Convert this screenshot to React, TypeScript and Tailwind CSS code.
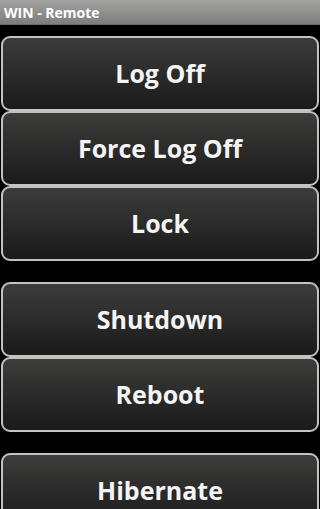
const groups = [["Log Off", "Force Log Off", "Lock"], ["Shutdown", "Reboot"], ["Hibernate"]];

const ActionButton = ({ label }: { label: string }) => (
  <button className="flex h-[75px] w-full items-center justify-center rounded-[9px] border-2 border-[#c2c2c0] bg-linear-to-b from-[#3c3d3b] to-[#1a1a1a] text-[25px] font-bold text-[#f4f4f4] font-['Open_Sans',sans-serif]">
    {label}
  </button>
);

export default function App() {
  return (
    <div className="h-[509px] w-[320px] overflow-hidden bg-black">
      {/* Title bar */}
      <div className="flex h-[25px] items-center border-b border-[#6e6e6c] bg-linear-to-b from-[#a3a3a1] to-[#7d7d7b] px-[4px]">
        <span className="text-[14px] font-bold text-white font-['Open_Sans',sans-serif]">WIN - Remote</span>
      </div>

      <div className="flex flex-col gap-[21px] px-[1px] pt-[11px]">
        {groups.map((group, i) => (
          <div key={i} className="flex flex-col">
            {group.map((label) => (
              <ActionButton key={label} label={label} />
            ))}
          </div>
        ))}
      </div>
    </div>
  );
}
